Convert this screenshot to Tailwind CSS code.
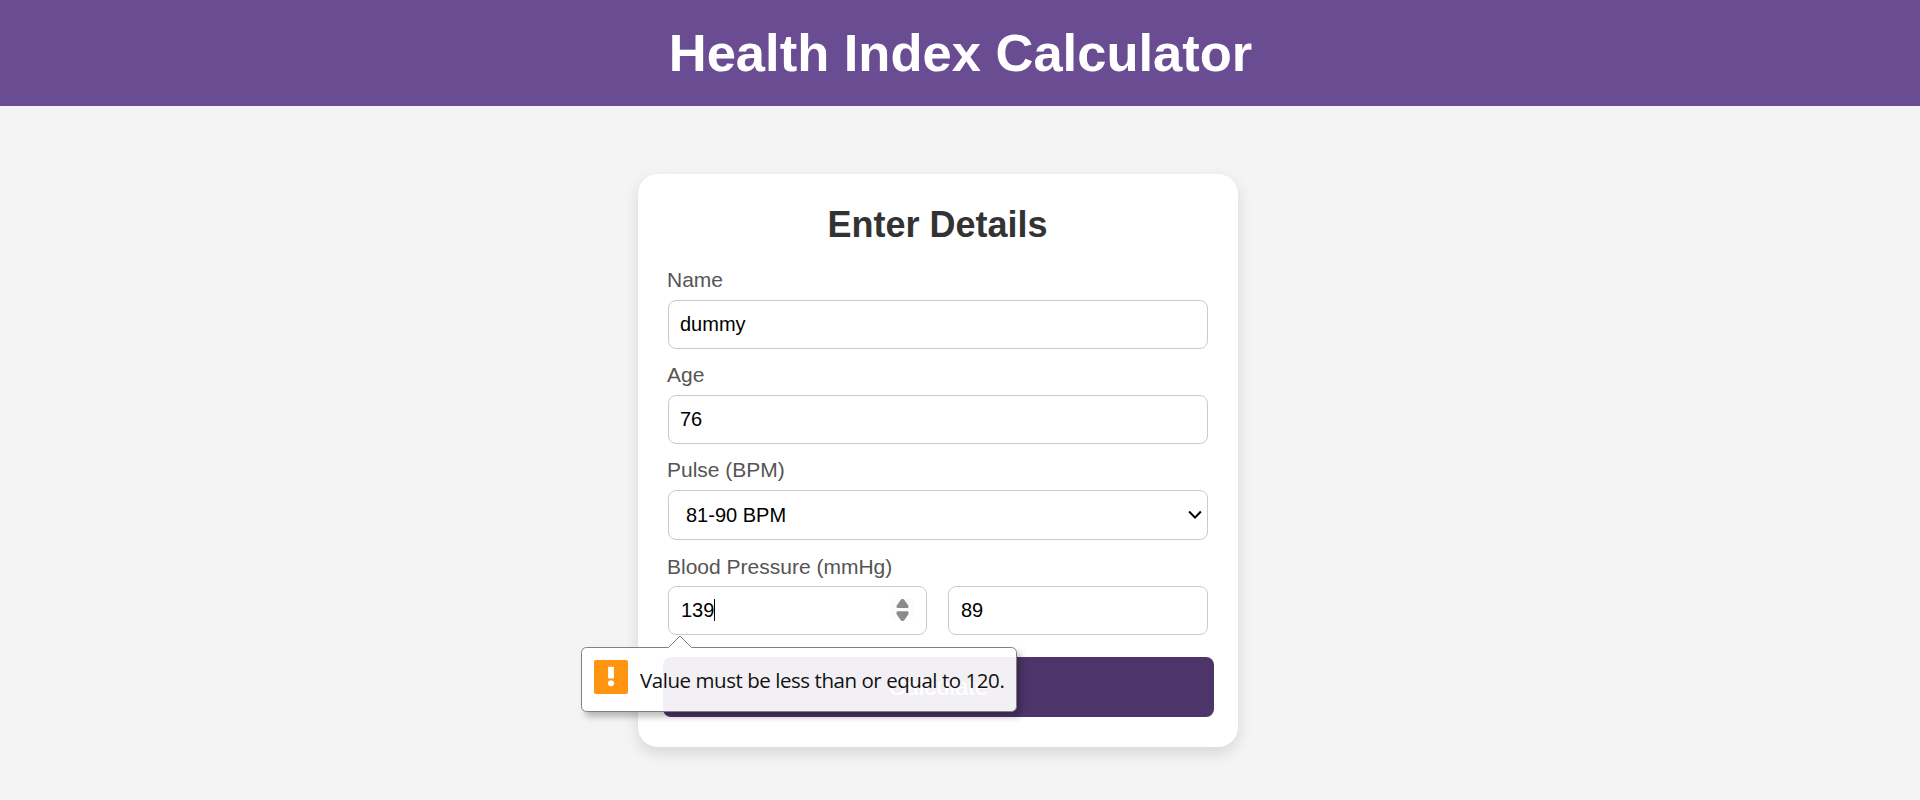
<!DOCTYPE html>
<html lang="en">
<head>
<meta charset="utf-8">
<title>Health Index Calculator</title>
<script src="https://cdn.jsdelivr.net/npm/@tailwindcss/browser@4"></script>
</head>
<body class="h-[800px] overflow-hidden bg-[#f4f4f4] font-['Liberation_Sans',Arial,sans-serif] text-xl leading-6 text-black">
<header class="flex h-[106px] items-center justify-center bg-[#6a4c93]">
  <h1 class="ml-px text-[52.5px] leading-[60px] font-bold text-white">Health Index Calculator</h1>
</header>
<main class="pt-[68px] pl-[638px]">
  <form class="flex h-[573px] w-[600px] flex-col rounded-[20px] bg-white px-[30px] pt-[30px] shadow-[0_6px_15px_rgba(0,0,0,0.12)]">
    <h2 class="mt-px -ml-px text-center text-4xl leading-10 font-bold text-[#333]">Enter Details</h2>
    <label class="mt-[23px] -ml-px text-[21px] text-[#555]">Name</label>
    <div class="mt-[8px] flex h-[49px] items-center rounded-[8px] border border-[#ccc] px-[11px] pb-[2px]">dummy</div>
    <label class="mt-[14px] -ml-px text-[21px] text-[#555]">Age</label>
    <div class="mt-[8px] flex h-[49px] items-center rounded-[8px] border border-[#ccc] px-[11px] pb-[2px]">76</div>
    <label class="mt-[14px] -ml-px text-[21px] text-[#555]">Pulse (BPM)</label>
    <div class="mt-[8px] flex h-[50px] items-center justify-between rounded-[8px] border border-[#ccc] pr-[5px] pb-px pl-[17px]">81-90 BPM
      <svg class="h-[10px] w-[14px]" viewBox="0 0 15 10" fill="none" stroke="#000" stroke-width="2.2"><path d="M1.2 1.3 7.5 7.8l6.3-6.5"/></svg>
    </div>
    <label class="mt-[15px] -ml-px text-[21px] text-[#555]">Blood Pressure (mmHg)</label>
    <div class="mt-[7px] flex gap-[21px]">
      <div class="relative flex h-[49px] w-[259px] items-center justify-between rounded-[8px] border border-[#ccc] pr-[13px] pb-[2px] pl-3">
        <span class="flex items-center">139<i class="h-[22px] w-px bg-black"></i></span>
        <span class="flex h-[22px] w-[22px] items-center justify-center bg-[#fcfcfc]">
          <svg class="h-[22px] w-[13px]" viewBox="0 0 13 22" fill="#8b8b8b"><path d="M5 .5Q6.500-.8 8 .5L12.300 6.500Q13 8.800 11.500 9H1.500Q0 8.800.7 6.500ZM5 21.500Q6.500 22.800 8 21.500L12.300 15.500Q13 12.500 11.500 12.300H1.500Q0 12.500.7 15.500Z"/></svg>
        </span>
        <div class="absolute top-[48px] left-[-88px] z-10 h-[78px] w-[437px]">
          <div class="absolute top-[12px] left-0 h-[65px] w-[436px] rounded-[5px] shadow-[4px_5px_6px_rgba(0,0,0,0.25)]"></div>
          <svg class="absolute inset-0" width="437" height="78" viewBox="0 0 437 78"><path d="M5.500 12.500H87.500L99 1l11.500 11.500H430.500a5 5 0 0 1 5 5V71.500a5 5 0 0 1-5 5H5.500a5 5 0 0 1-5-5V17.500a5 5 0 0 1 5-5Z" fill="#fff" fill-opacity=".93" stroke="#808080"/></svg>
          <div class="relative flex pt-[25px] pl-[13px]">
            <svg class="h-[34px] w-[34px]" viewBox="0 0 35 35"><rect width="35" height="35" rx="2" fill="#ff9410"/><path d="M14.500 7h6v12h-6z" fill="#fff"/><circle cx="17.500" cy="24" r="3.100" fill="#fff"/></svg>
            <span class="mt-[6px] ml-[12px] font-['Open_Sans',sans-serif] text-[20.5px] leading-7 tracking-[-0.45px] whitespace-nowrap text-[#111]">Value must be less than or equal to 120.</span>
          </div>
        </div>
      </div>
      <div class="flex h-[49px] w-[260px] items-center rounded-[8px] border border-[#ccc] px-3 pb-[2px]">89</div>
    </div>
    <div class="mt-[22px] -ml-[5px] flex h-[60px] w-[550.5px] items-center justify-center rounded-[8px] bg-[#4d356a] text-2xl text-white">Calculate</div>
  </form>
</main>
</body>
</html>
